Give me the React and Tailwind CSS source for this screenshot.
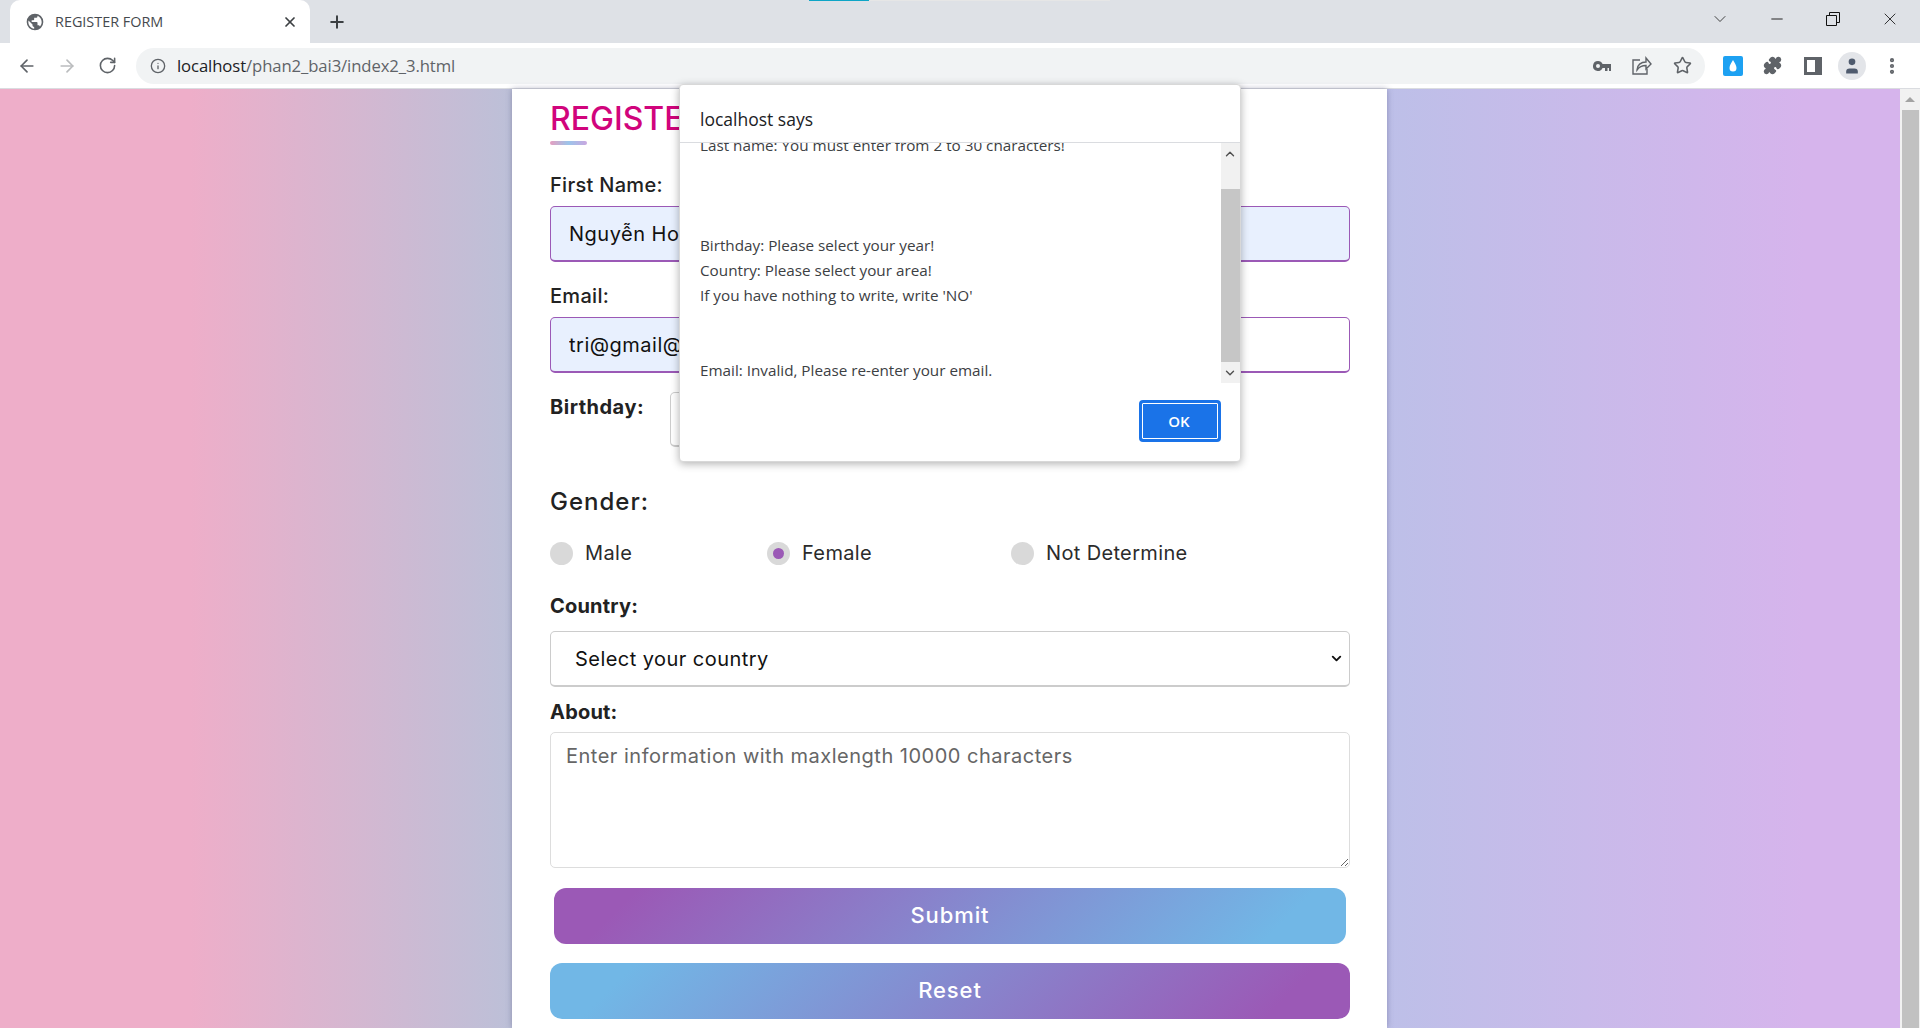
import { ChevronDown, Minus, X, Plus, ArrowLeft, ArrowRight, RotateCw, Info, Star, Puzzle, User, EllipsisVertical } from 'lucide-react'

const poppins = "font-['Inter','Noto_Sans',sans-serif]"
const segoe = "font-['Open_Sans','Noto_Sans',sans-serif]"

function Radio({ label, checked, width }) {
  return (
    <label className={`flex items-center ${width}`}>
      <span className="w-[23px] h-[23px] rounded-full bg-[#d9d9d9] flex items-center justify-center">
        {checked && <span className="w-[11px] h-[11px] rounded-full bg-[#9b59b6]"></span>}
      </span>
      <span className="ml-[12px] text-[20px] tracking-[0.35px] text-[#2b2b2b] leading-[23px]">{label}</span>
    </label>
  )
}

function TabStrip() {
  return (
    <div className="relative h-[43px] bg-[#dee1e6] flex items-end">
      <div className="absolute top-0 left-[809px] w-[60px] h-px bg-[#0ea5c6]"></div>
      <div className="absolute top-0 left-[869px] w-[241px] h-px bg-[#e6e6e6]"></div>
      <div className="ml-[10px] w-[300px] h-[43px] bg-white rounded-t-[10px] flex items-center pl-[15px] pr-[12px]">
        <svg width="20" height="20" viewBox="0 0 24 24" fill="#5f6368">
          <path d="M12 2a10 10 0 1 0 0 20 10 10 0 0 0 0-20zM4 12c0-.6.1-1.200.2-1.800L9 15v1c0 1.100.9 2 2 2v2c-3.900-.5-7-3.900-7-8zm13.900 5.400c-.3-.8-1-1.400-1.900-1.400h-1v-3c0-.6-.4-1-1-1H8v-2h2c.6 0 1-.4 1-1V7h2c1.100 0 2-.9 2-2v-.4c2.900 1.200 5 4.100 5 7.400 0 2.100-.8 4-2.100 5.400z" />
        </svg>
        <span className={`ml-[10px] text-[14.400px] text-[#45494e] ${segoe}`}>REGISTER FORM</span>
        <X size={16} strokeWidth={2.6} className="ml-auto text-[#3c4043]" />
      </div>
      <Plus size={20} strokeWidth={2.4} className="ml-[17px] mb-[11px] text-[#3c4043]" />
      <div className="ml-auto flex items-center h-[43px] pb-[5px]">
        <ChevronDown size={20} strokeWidth={1} className="text-[#222]" />
        <Minus size={18} strokeWidth={1.2} className="ml-[38px] text-[#111]" />
        <svg width="14" height="14" viewBox="0 0 14 14" fill="none" stroke="#111" className="ml-[40px]">
          <path d="M.5 3.500h10v10H.5zM3.500 3.500V.5h10v10h-3" />
        </svg>
        <X size={20} strokeWidth={1} className="ml-[40px] mr-[20px] text-[#111]" />
      </div>
    </div>
  )
}

function Toolbar() {
  return (
    <div className="h-[46px] bg-white border-b border-[#dadce0] flex items-center">
      <ArrowLeft size={20} strokeWidth={2} className="ml-[17px] text-[#5f6368]" />
      <ArrowRight size={20} strokeWidth={2} className="ml-[20px] text-[#babcbe]" />
      <RotateCw size={19} strokeWidth={2} className="ml-[21px] text-[#5f6368]" />
      <div className="ml-[19px] w-[1569px] h-[36px] rounded-full bg-[#f1f3f4] flex items-center pl-[14px] pr-[13px]">
        <Info size={16} strokeWidth={2} className="text-[#5f6368]" />
        <span className={`ml-[11px] text-[16.700px] tracking-[-0.1px] ${segoe}`}>
          <span className="text-[#202124]">localhost</span>
          <span className="text-[#5f6368]">/phan2_bai3/index2_3.html</span>
        </span>
        <svg width="18" height="10" viewBox="0 0 18 10" fill="#5f6368" className="ml-auto">
          <path fillRule="evenodd" d="M5 0a5 5 0 1 0 4.600 7H12v3h2.500V7H16V10h2V3H9.600A5 5 0 0 0 5 0zm0 3a2 2 0 1 1 0 4 2 2 0 0 1 0-4z" />
        </svg>
        <svg width="20" height="19" viewBox="0 0 20 19" fill="none" stroke="#5f6368" strokeWidth="1.400" className="ml-[21px]">
          <path d="M8 4H1v14h14v-5" />
          <path d="M5 14c0-5 4-8 9-8V2l5 6-5 5V9.500c-4 0-7 1.500-9 4.500z" />
        </svg>
        <Star size={19} strokeWidth={2} className="ml-[21px] text-[#5f6368]" />
      </div>
      <div className="ml-[18px] w-[20px] h-[20px] rounded-[2px] bg-[#1da1f2] flex items-center justify-center">
        <svg width="10" height="14" viewBox="0 0 10 14" fill="#fff"><path d="M5 1C3.500 4 1.500 6 1.500 9a3.500 3.500 0 0 0 7 0C8.500 6 6.500 4 5 1z" /></svg>
      </div>
      <Puzzle size={19} strokeWidth={2} fill="#5f6368" className="ml-[20px] text-[#5f6368]" />
      <div className="ml-[22px] w-[18px] h-[18px] border-[3px] border-[#5f6368] border-l-[7px] rotate-180"></div>
      <div className="ml-[16px] w-[28px] h-[28px] rounded-full bg-[#e3e5e9] flex items-center justify-center">
        <User size={20} fill="#4f5b6e" strokeWidth={0} />
      </div>
      <EllipsisVertical size={20} strokeWidth={3} className="ml-[16px] text-[#5f6368]" />
    </div>
  )
}

function AlertDialog() {
  return (
    <div className={`absolute top-[84px] left-[679px] w-[562px] h-[378px] bg-white rounded-[4px] border border-[#d8d8d8] shadow-[0_2px_8px_rgba(0,0,0,0.3)] ${segoe}`}>
      <div className="h-[58px] border-b border-[#dadce0] pl-[20px] pt-[20px] text-[17.500px] leading-[28px] text-[#202124]">localhost says</div>
      <div className="flex h-[240px]">
        <div className="flex-1 overflow-hidden pl-[20px] text-[15.250px] leading-[25px] text-[#3c4043]">
          <div className="mt-[-10px]">Last name: You must enter from 2 to 30 characters!</div>
          <div className="h-[75px]"></div>
          <div>Birthday: Please select your year!</div>
          <div>Country: Please select your area!</div>
          <div>If you have nothing to write, write 'NO'</div>
          <div className="h-[50px]"></div>
          <div>Email: Invalid, Please re-enter your email.</div>
        </div>
        <div className="w-[19px] bg-[#f1f1f1] flex flex-col items-center">
          <div className="h-[46px] flex items-start justify-center w-full pt-[4px] pr-[1px]">
            <ChevronDown size={14} strokeWidth={2.4} className="rotate-180 text-[#505050]" />
          </div>
          <div className="w-full h-[173px] bg-[#c6c6c6]"></div>
          <div className="flex-1 flex items-center justify-center pr-[1px]">
            <ChevronDown size={14} strokeWidth={2.4} className="text-[#505050]" />
          </div>
        </div>
      </div>
      <div className="flex justify-end pr-[19px] pt-[17px]">
        <button className="w-[82px] h-[42px] pr-[2px] rounded-[4px] border-2 border-[#1a73e8] outline outline-1 -outline-offset-4 outline-white bg-[#1a73e8] text-white text-[15px] font-semibold">OK</button>
      </div>
    </div>
  )
}

export default function App() {
  return (
    <div className={`relative h-[1028px] overflow-hidden flex flex-col ${poppins}`}>
      <TabStrip />
      <Toolbar />
      <div className="flex-1 flex min-h-0">
        <div className="flex-1 pl-[512px] bg-[linear-gradient(90deg,#eeaec9_0%,#eeaec9_10%,#bcc0d8_27%,#bcc0e8_72%,#d6b4ec_95%)]">
          <div className="w-[875px] h-full bg-white pl-[38px] pr-[37px] shadow-[0_0_6px_rgba(80,80,120,0.45)] text-[#222]">
            <h1 className="pt-[7px] text-[32px] leading-[45px] font-medium text-[#d1047c]">REGISTER FORM</h1>
            <div className="w-[37px] h-[4px] rounded-full bg-[linear-gradient(90deg,#e59ec0,#9cc4ea,#c9a7e0)]"></div>

            <div className="mt-[25px] text-[20px] tracking-[0.3px] leading-[30px] font-medium">First Name:</div>
            <input readOnly value="Nguyễn Hoàng Trí" className="block mt-[6px] w-full h-[56px] px-[18px] rounded-[5px] border border-[#9b59b6] border-b-2 bg-[#e8f0fe] text-[20px] tracking-[0.5px] text-[#111] outline-none" />

            <div className="mt-[19px] text-[20px] tracking-[0.3px] leading-[30px] font-medium">Email:</div>
            <input readOnly value="tri@gmail@gmail.com" className="block mt-[6px] w-full h-[56px] px-[18px] rounded-[5px] border border-[#9b59b6] border-b-2 bg-[linear-gradient(90deg,#e8f0fe_50%,#fff_50%)] text-[20px] tracking-[0.5px] text-[#111] outline-none" />

            <div className="mt-[19px] flex h-[55px]">
              <div className="w-[120px] text-[20px] tracking-[0.5px] leading-[30px] font-bold">Birthday:</div>
              <div className="w-[400px] rounded-[5px] border border-[#ccc] border-b-2"></div>
            </div>

            <div className="mt-[37px] text-[24px] tracking-[1px] leading-[36px] font-medium">Gender:</div>
            <div className="mt-[22px] flex h-[23px]">
              <Radio label="Male" width="w-[217px]" />
              <Radio label="Female" checked width="w-[244px]" />
              <Radio label="Not Determine" />
            </div>

            <div className="mt-[26px] text-[20px] tracking-[0.2px] leading-[30px] font-bold">Country:</div>
            <div className="mt-[10px] h-[56px] rounded-[5px] border border-[#ccc] border-b-2 flex items-center pl-[24px] pr-[5px] text-[20px] tracking-[0.45px] text-[#111]">
              Select your country
              <ChevronDown size={15} strokeWidth={3} className="ml-auto" />
            </div>

            <div className="mt-[10px] text-[20px] tracking-[0.2px] leading-[30px] font-bold">About:</div>
            <textarea readOnly placeholder="Enter information with maxlength 10000 characters" className="block mt-[5px] w-full h-[136px] px-[15px] py-[8px] rounded-[5px] border border-[#ddd] text-[20px] tracking-[0.5px] leading-[30px] outline-none placeholder:text-[#666]"></textarea>

            <button className="block mt-[20px] mx-[4px] w-[792px] h-[56px] pb-[2px] rounded-[12px] bg-[linear-gradient(135deg,#9b59b6_10%,#71b7e6_90%)] text-white text-[22px] tracking-[0.9px] font-medium">Submit</button>
            <button className="block mt-[19px] w-full h-[56px] pb-[2px] rounded-[12px] bg-[linear-gradient(135deg,#71b7e6_10%,#9b59b6_90%)] text-white text-[22px] tracking-[0.9px] font-medium">Reset</button>
          </div>
        </div>
        <div className="w-[20px] bg-[#f1f1f1] flex flex-col items-center">
          <div className="h-[21px] flex items-center justify-center">
            <div className="w-0 h-0 border-x-[5px] border-x-transparent border-b-[5px] border-b-[#a3a3a3]"></div>
          </div>
          <div className="w-[17px] flex-1 bg-[#c1c1c1]"></div>
        </div>
      </div>
      <AlertDialog />
    </div>
  )
}
